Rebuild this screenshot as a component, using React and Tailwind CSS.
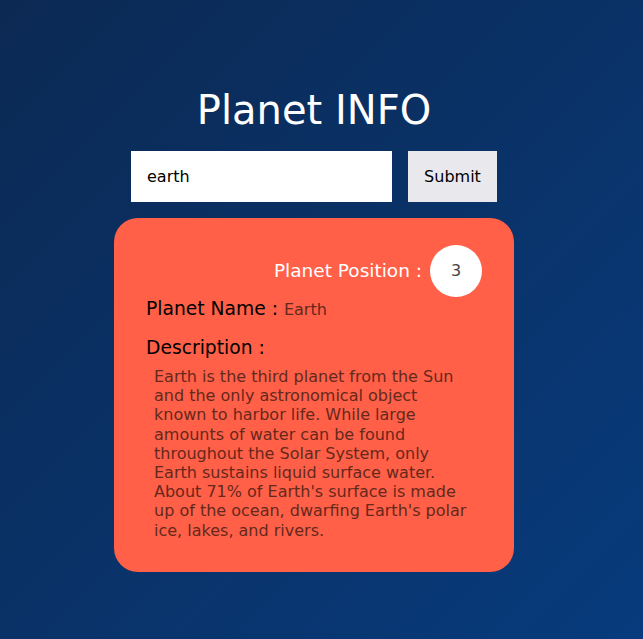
export default function App() {
	return (
		<div className="min-h-[639px] w-full bg-gradient-to-br from-[#0b2953] to-[#073b7d] font-['DejaVu_Sans',sans-serif] flex flex-col items-center pt-[84px] pb-[68px] pr-[15px]">
			<h1 className="text-[40px] leading-[52px] text-white">Planet INFO</h1>
			<form
				className="flex gap-4 mt-[15px]"
				onSubmit={(e) => e.preventDefault()}
			>
				<input
					className="w-[261px] h-[51px] bg-white px-4 text-[16px] text-black outline-none"
					defaultValue="earth"
				/>
				<button className="w-[89px] h-[51px] bg-[#e9e8ed] text-[16px] text-black">
					Submit
				</button>
			</form>
			<div className="mt-4 w-[400px] rounded-[24px] bg-[#ff6047] px-8 pt-[27px] pb-[32px]">
				<div className="flex items-center justify-end gap-[8px]">
					<span className="text-[18.5px] text-white">Planet Position :</span>
					<span className="w-[52px] h-[52px] rounded-full bg-white flex items-center justify-center text-[16px] text-[#444]">
						3
					</span>
				</div>
				<div className="mt-[1px] text-[18.72px] text-black leading-[22px]">
					Planet Name : <span className="text-[16px] text-[#66281c]">Earth</span>
				</div>
				<div className="mt-[16px] text-[18.72px] text-black leading-[22px]">Description :</div>
				<p className="mt-[8px] ml-2 w-[320px] text-[16px] leading-[19.2px] text-[#66281c]">
					Earth is the third planet from the Sun and the only astronomical object known to
					harbor life. While large amounts of water can be found throughout the Solar System,
					only Earth sustains liquid surface water. About 71% of Earth's surface is made up of
					the ocean, dwarfing Earth's polar ice, lakes, and rivers.
				</p>
			</div>
		</div>
	);
}
